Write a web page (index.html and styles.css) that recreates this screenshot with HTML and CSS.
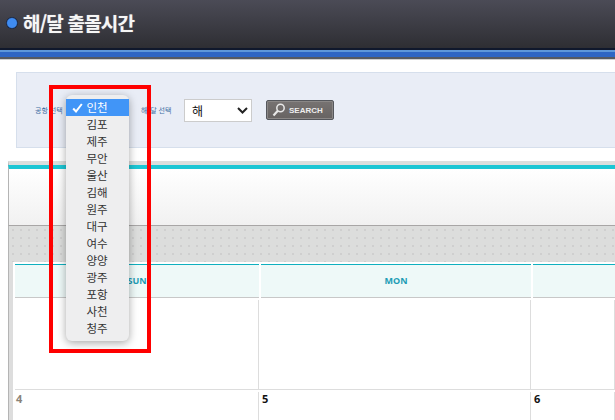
FILE: index.html
```html
<!DOCTYPE html>
<html lang="ko">
<head>
<meta charset="utf-8">
<title>해/달 출몰시간</title>
<link rel="stylesheet" href="styles.css">
</head>
<body>
<header class="top">
  <span class="bullet"></span>
  <h1 class="title">해/달 출몰시간</h1>
</header>
<div class="band"></div>
<main class="content">
  <section class="search">
    <span class="lbl lbl-a">공항 선택</span>
    <span class="lbl lbl-b">해/달 선택</span>
    <span class="sel">해
      <svg class="chev" width="11" height="7" viewBox="0 0 11 7"><path d="M1 1l4.500 4.500L10 1" fill="none" stroke="#222" stroke-width="2"/></svg>
    </span>
    <span class="btn">
      <svg class="mag" width="15" height="14" viewBox="0 0 15 14"><circle cx="8.500" cy="5" r="3.700" fill="none" stroke="#e8e8e8" stroke-width="1.500"/><path d="M5.800 7.800L1.500 12.500" stroke="#e8e8e8" stroke-width="2.200"/></svg>
      SEARCH
    </span>
  </section>
  <section class="cal">
    <div class="cal-top"></div>
    <div class="cal-gray"></div>
    <div class="cal-body">
      <div class="heads">
        <div class="hd">SUN</div>
        <div class="hd">MON</div>
        <div class="hd"></div>
      </div>
      <div class="row r1">
        <div class="cell"></div>
        <div class="cell"></div>
        <div class="cell"></div>
      </div>
      <div class="row r2">
        <div class="cell"><b class="num sun">4</b></div>
        <div class="cell"><b class="num">5</b></div>
        <div class="cell"><b class="num">6</b></div>
      </div>
    </div>
  </section>
</main>
<div class="redbox"></div>
<ul class="menu">
  <li class="on"><svg class="chk" width="11" height="10" viewBox="0 0 11 10"><path d="M1.200 5.500L4 8.500L9.800 1" fill="none" stroke="#fff" stroke-width="2"/></svg>인천</li>
  <li>김포</li><li>제주</li><li>무안</li><li>울산</li><li>김해</li><li>원주</li><li>대구</li><li>여수</li><li>양양</li><li>광주</li><li>포항</li><li>사천</li><li>청주</li>
</ul>
</body>
</html>
```
FILE: styles.css
```css
* { box-sizing: border-box; }
html, body { margin: 0; height: 420px; overflow: hidden; background: #fff; }
body { width: 615px; font-family: "Noto Sans CJK KR", "Noto Sans", sans-serif; position: relative; }

.top { height: 48px; display: flex; align-items: center; padding: 0 0 2px 6px; background: linear-gradient(#4b4b56, #2e2e33); }
.bullet { width: 12px; height: 12px; border-radius: 50%; background: radial-gradient(circle at 50% 50%, #3f8cf2 0, #3f8cf2 52%, #14203c 68%, #5a5a62 100%); }
.title { margin: 0 0 0 5px; color: #f6f6f6; font-size: 19px; font-weight: 700; letter-spacing: -.8px; line-height: 24px; text-shadow: 0 0 1px rgba(255,255,255,.5); }
.band { height: 13px; background: linear-gradient(#10182c 0 2px, #5f98da 2px 4px, #2f66c4 4px 9px, #565a62 9px 11px, #cfcfcf 11px 12px, #fff 12px); }

.content { padding: 11px 0 0 16px; }
.search { height: 76px; background: #e9edf6; border: 1px solid #d6dfec; border-right: 0; display: flex; align-items: center; padding-left: 18px; }
.lbl { font-size: 7px; line-height: 10px; color: #3f6fa5; white-space: nowrap; }
.lbl-a { width: 106px; }
.lbl-b { width: 43px; }
.sel { width: 68px; height: 23px; background: #fff; border: 1px solid #ccc; display: flex; align-items: center; justify-content: space-between; padding: 0 3px 0 7px; font-size: 12px; color: #111; }
.btn { margin-left: 14px; width: 68px; height: 20px; background: linear-gradient(#777372, #676362); border: 1px solid #55575c; border-radius: 2px; box-shadow: inset 0 0 0 1px #8a8786; color: #eee; font: 700 8px "Liberation Sans", sans-serif; display: flex; align-items: center; gap: 2px; padding-left: 5px; }

.cal { margin: 13px 0 0 -8px; height: 259px; border-top: 4px solid #dcdedd; border-left: 1px solid #b4b4b4; background: #fff; }
.cal-top { height: 61px; margin-left: -1px; border-top: 4px solid #1cc6d4; border-bottom: 1px solid #a8a6a6; border-left: 1px solid #b4b4b4; background: linear-gradient(#fff, #f1f1f1); }
.cal-gray { height: 36px; background: #dcdddc radial-gradient(#cfcfcf 1px, transparent 1px) 0 0 / 8px 8px; }
.cal-body { height: 158px; padding: 2px 0 0 2px; border-left: 4px solid #ddd; background: #fff; }
.heads, .row { display: grid; grid-template-columns: 244px 270px 1fr; column-gap: 2px; }
.hd { height: 34px; background: #eef9f8; border-top: 1px solid #0fb0bf; border-bottom: 1px solid #c8c8c8; color: #1d9db5; font: 700 9px/32px "Open Sans", sans-serif; text-align: center; }
.row { border-bottom: 1px solid #ddd; }
.r1 { margin-top: 2px; height: 90px; }
.r2 { margin-top: 2px; height: 28px; border-bottom: 0; }
.cell { border-right: 1px solid #ddd; padding-left: 1px; }
.num { display: block; font: 700 11px/14px "Open Sans", sans-serif; color: #111; }
.sun { color: #8a8378; }

.redbox { position: absolute; left: 49px; top: 85px; width: 102px; height: 268px; border: 4px solid #f00; }
.menu { position: absolute; left: 66px; top: 95px; width: 63px; height: 246px; margin: 0; padding: 4px 0 0; list-style: none; background: #eeeeef; border-radius: 6px; box-shadow: 0 2px 9px rgba(0,0,0,.35); }
.menu li { height: 17px; font-size: 11.500px; line-height: 17px; color: #333; text-align: center; padding-right: 1px; position: relative; }
.menu li.on { background: #4195f7; color: #fff; }
.chk { position: absolute; left: 6px; top: 4px; }
```
